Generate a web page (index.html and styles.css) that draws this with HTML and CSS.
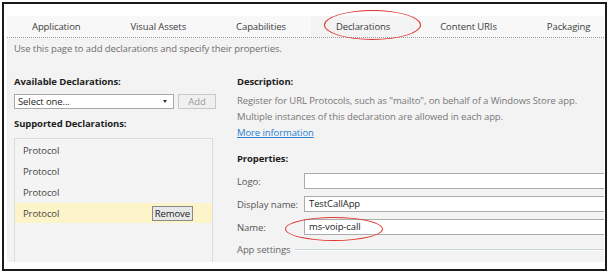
FILE: index.html
```html
<!DOCTYPE html>
<html lang="en">
<head>
    <meta charset="UTF-8">
    <title>Package.appxmanifest - Declarations</title>
    <link rel="stylesheet" href="styles.css">
</head>
<body>
    <div class="frame">
        <div class="designer">
            <nav class="tabs">
                <span class="tab">Application</span>
                <span class="tab">Visual Assets</span>
                <span class="tab">Capabilities</span>
                <span class="tab active">Declarations</span>
                <span class="tab">Content URIs</span>
                <span class="tab">Packaging</span>
            </nav>
            <div class="page">
                <p class="intro">Use this page to add declarations and specify their properties.</p>
                <div class="columns">
                    <section class="left">
                        <h3 class="heading">Available Declarations:</h3>
                        <div class="picker">
                            <div class="select">Select one...<span class="caret"></span></div>
                            <button class="btn add" disabled>Add</button>
                        </div>
                        <h3 class="heading supported">Supported Declarations:</h3>
                        <ul class="decl-list">
                            <li>Protocol</li>
                            <li>Protocol</li>
                            <li>Protocol</li>
                            <li class="selected">Protocol <button class="btn remove">Remove</button></li>
                        </ul>
                    </section>
                    <section class="right">
                        <h3 class="heading">Description:</h3>
                        <p class="desc">Register for URL Protocols, such as "mailto", on behalf of a Windows Store app.</p>
                        <p class="desc">Multiple instances of this declaration are allowed in each app.</p>
                        <a class="more" href="#">More information</a>
                        <h3 class="heading props">Properties:</h3>
                        <div class="field">
                            <label>Logo:</label>
                            <div class="input"></div>
                        </div>
                        <div class="field">
                            <label>Display name:</label>
                            <div class="input">TestCallApp</div>
                        </div>
                        <div class="field">
                            <label>Name:</label>
                            <div class="input">ms-voip-call</div>
                        </div>
                        <div class="group">App settings<span class="rule"></span></div>
                    </section>
                </div>
            </div>
        </div>
        <!-- red annotation marks -->
        <span class="mark mark-tab"></span>
        <span class="mark mark-name"></span>
    </div>
</body>
</html>
```

FILE: styles.css
```css
* {
    margin: 0;
    padding: 0;
    box-sizing: border-box;
}

body {
    font-family: 'Open Sans', 'Noto Sans', sans-serif;
    font-size: 9.5px;
    letter-spacing: -0.1px;
    background: #fff;
    color: #1e1e1e;
}

.frame {
    position: relative;
    margin: 2px 0 0 2px;
    width: 605px;
    height: 269px;
    border: 2px solid #1a1a1a;
    padding: 0 1px 7px 3px;
    overflow: hidden;
}

.designer {
    height: 100%;
    display: flex;
    flex-direction: column;
    overflow: hidden;
}

.tabs {
    display: flex;
    padding-top: 12px;
    border-bottom: 1px dotted #9a9a9a;
    background: #fff;
    white-space: nowrap;
    overflow: hidden;
}

.tab {
    flex-shrink: 0;
    padding: 0 25px;
    height: 21px;
    line-height: 21px;
    color: #3c3c3c;
    background: #f8f8f8;
}

.tab:last-child {
    flex: 1;
}

.tab.active {
    background: #f3f3f3;
}

.page {
    flex: 1;
    background: #f3f3f3;
    padding: 3px 0 0 7px;
    overflow: hidden;
}

.intro {
    line-height: 16px;
    color: #6e6e6e;
}

.columns {
    display: flex;
    gap: 21px;
    margin-top: 17px;
}

.heading {
    font-size: 9.5px;
    font-weight: 700;
    line-height: 16px;
    color: #1e1e1e;
}

.left {
    width: 202px;
    flex-shrink: 0;
}

.picker {
    display: flex;
    gap: 4px;
    margin-top: 4px;
}

.select {
    position: relative;
    width: 160px;
    height: 15px;
    line-height: 13px;
    padding-left: 3px;
    background: #fff;
    border: 1px solid #a9a9a9;
    color: #1e1e1e;
}

.caret {
    position: absolute;
    right: 6px;
    top: 5px;
    border-left: 2.5px solid transparent;
    border-right: 2.5px solid transparent;
    border-top: 3px solid #333;
}

.btn {
    font-family: inherit;
    font-size: 9.5px;
    letter-spacing: -0.1px;
    height: 15px;
    line-height: 13px;
    border: 1px solid #c8c8c8;
    background: #f0f0f0;
    color: #9a9a9a;
}

.add {
    width: 38px;
}

.supported {
    margin-top: 7px;
}

.decl-list {
    list-style: none;
    margin-top: 6px;
    width: 199px;
    height: 130px;
    padding-top: 1px;
    border: 1px solid #dcdcdc;
    border-bottom: none;
    background: #f4f4f4;
}

.decl-list li {
    display: flex;
    align-items: center;
    justify-content: space-between;
    height: 21px;
    padding: 0 19px 0 8px;
    color: #444;
}

.decl-list li.selected {
    background: #fdf5c9;
    height: 20px;
}

.remove {
    color: #1e1e1e;
    background: #e8e8e8;
    border-color: #8a8a8a;
    padding: 0 2px;
}

.right {
    flex: 1;
    min-width: 0;
}

.desc {
    line-height: 16px;
    color: #777;
    white-space: nowrap;
}

.desc:first-of-type {
    margin-top: 3px;
}

.more {
    display: block;
    width: max-content;
    line-height: 16px;
    color: #2a7fd4;
}

.props {
    margin-top: 10px;
}

.field {
    display: flex;
    align-items: center;
    margin-top: 7px;
    height: 16px;
}

.props + .field {
    margin-top: 6px;
}

.field label {
    width: 67px;
    color: #555;
}

.input {
    flex: 1;
    height: 16px;
    line-height: 14px;
    padding-left: 4px;
    background: #fff;
    border: 1px solid #ababab;
    border-right: none;
    color: #1e1e1e;
}

.group {
    display: flex;
    align-items: center;
    gap: 5px;
    margin-top: 7px;
    line-height: 16px;
    color: #666;
}

.rule {
    flex: 1;
    border-top: 1px solid #c9d3da;
    border-bottom: 1px solid #fff;
}

.mark {
    position: absolute;
    border: 1px solid #e0322c;
    border-radius: 50%;
}

.mark-tab {
    left: 320px;
    top: 6px;
    width: 97px;
    height: 30px;
}

.mark-name {
    left: 281px;
    top: 213px;
    width: 98px;
    height: 24px;
}
```
